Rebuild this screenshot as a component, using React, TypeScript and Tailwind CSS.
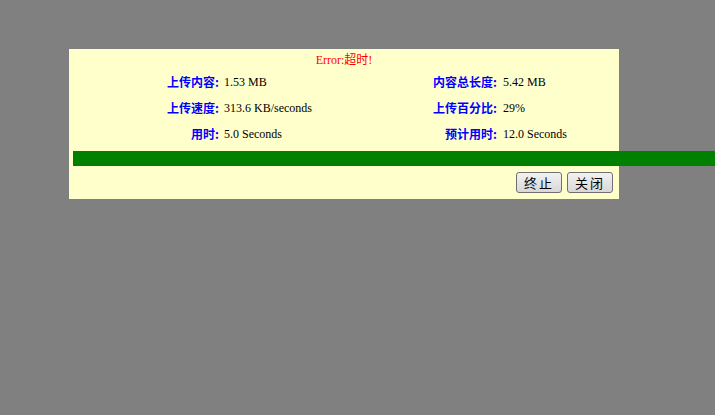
import React from 'react';

// --- upload progress dialog ---

const ROWS = [
  { l1: '上传内容:', v1: '1.53 MB', l2: '内容总长度:', v2: '5.42 MB' },
  { l1: '上传速度:', v1: '313.6 KB/seconds', l2: '上传百分比:', v2: '29%' },
  { l1: '用时:', v1: '5.0 Seconds', l2: '预计用时:', v2: '12.0 Seconds' },
];

const serif = "font-['Liberation_Serif','Noto_Sans_CJK_SC',serif]";
const cjk = "font-['Noto_Sans_CJK_SC','Liberation_Sans',sans-serif]";

const Btn = ({ label }: { label: string }) => (
  <button className={`h-[21px] w-[46px] rounded-[3px] border border-[#707070] bg-gradient-to-b from-[#f2f2f2] to-[#d8d8d8] text-[13px] leading-none tracking-[2px] text-black ${cjk}`}>
    {label}
  </button>
);

export default function App() {
  return (
    <div className="w-screen h-screen overflow-hidden bg-[#808080]">
      <div className={`ml-[69px] mt-[49px] w-[550px] bg-[#ffffcc] ${serif}`}>
        <div className="h-[20px] pt-[2px] flex items-center justify-center text-[12px] text-[#ff0000]">
          Error:超时!
        </div>

        {ROWS.map((r, i) => (
          <div key={i} className="h-[26px] grid grid-cols-[150px_150px_128px_1fr] items-center text-[12px]">
            <span className={`text-right font-bold text-[#0000ff] ${cjk}`}>{r.l1}</span>
            <span className="pl-[5px] text-black">{r.v1}</span>
            <span className={`text-right font-bold text-[#0000ff] ${cjk}`}>{r.l2}</span>
            <span className="pl-[6px] text-black">{r.v2}</span>
          </div>
        ))}

        {/* progress bar runs past the panel edge */}
        <div className="mt-[4px] ml-[4px] h-[15px] w-[642px] bg-[#008000]"></div>

        <div className="flex justify-end gap-[5px] pt-[6px] pb-[6px] pr-[6px]">
          <Btn label="终止" />
          <Btn label="关闭" />
        </div>
      </div>
    </div>
  );
}
